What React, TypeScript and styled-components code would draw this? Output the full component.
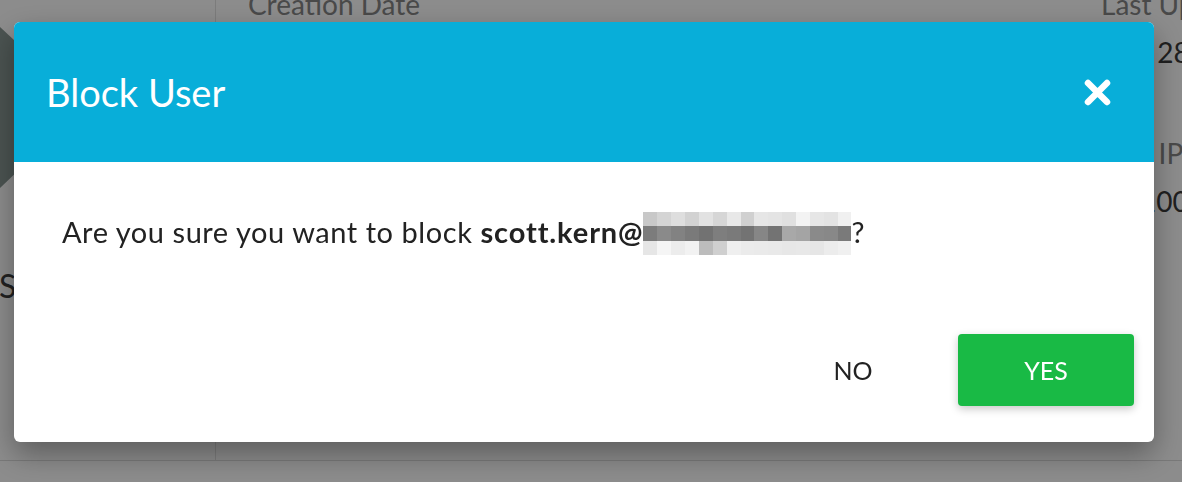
import React from 'react'
import styled, { createGlobalStyle } from 'styled-components'

const GlobalStyle = createGlobalStyle`
  html, body {
    margin: 0;
    padding: 0;
    background: #fff;
    font-family: Lato, "Open Sans", sans-serif;
  }
  * {
    box-sizing: border-box;
  }
`

const Page = styled.div`
  position: relative;
  width: 1182px;
  height: 482px;
  overflow: hidden;
  background: #fff;
`

const PageBody = styled.div`
  display: flex;
  align-items: flex-start;
  height: 461px;
  border-bottom: 1px solid #dcdcdc;
`

const Sidebar = styled.aside`
  width: 216px;
  height: 100%;
  flex-shrink: 0;
  display: flex;
  flex-direction: column;
  border-right: 1px solid #e2e2e2;
`

const Avatar = styled.svg`
  display: block;
  width: 60px;
  height: 200px;
`

const SideLabel = styled.div`
  margin-top: 66px;
  margin-left: -1px;
  font-size: 32px;
  line-height: 40px;
  color: #3c3c3c;
`

const Details = styled.div`
  display: grid;
  grid-template-columns: 853px auto;
  align-content: start;
  row-gap: 65px;
  margin-top: -14px;
  padding-left: 32px;
  white-space: nowrap;
`

const Field = styled.div`
  display: flex;
  flex-direction: column;
  gap: 12px;
`

const FieldLabel = styled.div`
  font-size: 28px;
  line-height: 36px;
  color: #868686;
`

const FieldValue = styled.div`
  font-size: 28px;
  line-height: 36px;
  color: #3a3a3a;
`

const Overlay = styled.div`
  position: fixed;
  inset: 0;
  background: rgba(0, 0, 0, 0.45);
  display: flex;
  align-items: flex-start;
  padding: 22px 0 0 14px;
`

const Modal = styled.div`
  width: 1140px;
  height: 420px;
  background: #fff;
  border-radius: 6px;
  overflow: hidden;
  display: flex;
  flex-direction: column;
  box-shadow: 0 12px 30px rgba(0, 0, 0, 0.35);
`

const ModalHeader = styled.header`
  height: 140px;
  flex-shrink: 0;
  background: #08aed9;
  display: flex;
  align-items: center;
  justify-content: space-between;
  padding: 0 43px 0 32px;
`

const Title = styled.h2`
  margin: 0;
  font-size: 38px;
  font-weight: 400;
  color: #fff;
`

const CloseButton = styled.button`
  border: 0;
  padding: 0;
  background: transparent;
  display: flex;
  cursor: pointer;
`

const ModalBody = styled.div`
  flex: 1;
  display: flex;
  flex-direction: column;
  justify-content: space-between;
  padding: 50px 20px 36px 48px;
`

const Message = styled.p`
  margin: 0;
  font-size: 29px;
  line-height: 40px;
  letter-spacing: 0.55px;
  color: #222;

  b {
    font-weight: 700;
    letter-spacing: 0.9px;
  }
`

const Mosaic = styled.span`
  display: inline-block;
  overflow: hidden;
  vertical-align: -12px;
  width: 208px;
  height: 43px;
`

const MosaicGrid = styled.span`
  display: grid;
  grid-template-columns: repeat(15, 1fr);
  grid-template-rows: 14px 15px 14px;
  width: 100%;
  height: 100%;
`

const Cell = styled.span<{ $c: string }>`
  background: ${({ $c }) => $c};
`

const Actions = styled.div`
  display: flex;
  justify-content: flex-end;
  gap: 17px;
`

const Button = styled.button<{ $primary?: boolean }>`
  width: 176px;
  height: 72px;
  border: 0;
  border-radius: 4px;
  font-family: Lato, "Open Sans", sans-serif;
  font-size: 25px;
  text-transform: uppercase;
  cursor: pointer;
  background: ${({ $primary }) => ($primary ? '#19ba45' : 'transparent')};
  color: ${({ $primary }) => ($primary ? '#fff' : '#222')};
  box-shadow: ${({ $primary }) => ($primary ? '0 3px 8px rgba(0, 0, 0, 0.22)' : 'none')};
`

const mosaicRows = [
  ['#c8c8c8', '#d4d4d4', '#dedede', '#d2d2d2', '#e2e2e2', '#d6d6d6', '#e8e8e8', '#d0d0d0', '#e6e6e6', '#e4e4e4', '#e0e0e0', '#f3f3f3', '#e6e6e6', '#e3e3e3', '#f0f0f0'],
  ['#7c7c7c', '#8a8a8a', '#828282', '#7a7a7a', '#727272', '#7e7e7e', '#7a7a7a', '#737373', '#868686', '#737373', '#a8a8a8', '#a4a4a4', '#8a8a8a', '#888888', '#7a7a7a'],
  ['#e6e6e6', '#f5f5f5', '#ececec', '#f2f2f2', '#bcbcbc', '#cfcfcf', '#efefef', '#ebebeb', '#eaeaea', '#e9e9e9', '#e7e7e7', '#e8e8e8', '#e6e6e6', '#ececec', '#f0f0f0'],
]

const App = () => (
  <>
    <GlobalStyle />
    <Page>
      <PageBody>
        <Sidebar>
          <Avatar viewBox="0 0 60 200">
            <polygon points="0,27 44,68 44,146 0,188" fill="#899894" />
          </Avatar>
          <SideLabel>Status</SideLabel>
        </Sidebar>
        <Details>
          <Field>
            <FieldLabel>Creation Date</FieldLabel>
            <FieldValue>Feb 12, 2018</FieldValue>
          </Field>
          <Field>
            <FieldLabel>Last Updated</FieldLabel>
            <FieldValue>Mar 28, 2018</FieldValue>
          </Field>
          <Field>
            <FieldLabel>Sign Up IP</FieldLabel>
            <FieldValue>10.0.0.12</FieldValue>
          </Field>
          <Field>
            <FieldLabel>Last IP</FieldLabel>
            <FieldValue>10.100.0.1</FieldValue>
          </Field>
        </Details>
      </PageBody>

      <Overlay>
        <Modal role="dialog" aria-labelledby="block-user-title">
          <ModalHeader>
            <Title id="block-user-title">Block User</Title>
            <CloseButton aria-label="Close">
              <svg width="27" height="27" viewBox="0 0 27 27">
                <path d="M4 4 L23 23 M23 4 L4 23" stroke="#fff" strokeWidth="6.5" strokeLinecap="round" />
              </svg>
            </CloseButton>
          </ModalHeader>
          <ModalBody>
            <Message>
              Are you sure you want to block <b>scott.kern@</b>
              <Mosaic>
                <MosaicGrid>
                  {mosaicRows.map((row, r) =>
                    row.map((c, i) => <Cell key={`${r}-${i}`} $c={c} />)
                  )}
                </MosaicGrid>
              </Mosaic>
              ?
            </Message>
            <Actions>
              <Button>No</Button>
              <Button $primary>Yes</Button>
            </Actions>
          </ModalBody>
        </Modal>
      </Overlay>
    </Page>
  </>
)

export default App
